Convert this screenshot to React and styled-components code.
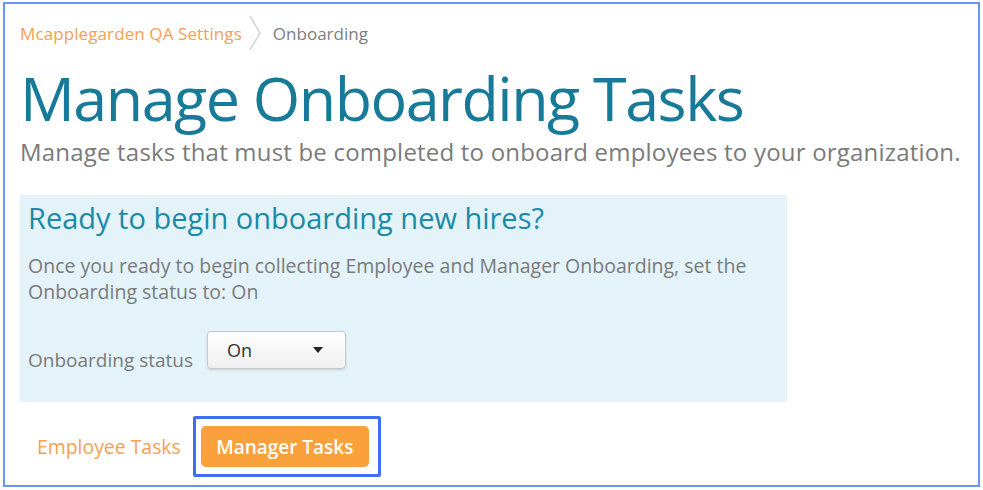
import styled, { createGlobalStyle } from 'styled-components'

const GlobalStyle = createGlobalStyle`
    html, body {
        margin: 0;
        padding: 0;
        background: #ffffff;
    }

    body {
        font-family: 'Open Sans', 'Liberation Sans', sans-serif;
    }
`

const Frame = styled.div`
    box-sizing: border-box;
    width: 977px;
    height: 485px;
    margin: 2px 0 0 3px;
    border: 2px solid #6a95f2;
    padding: 16px 0 0 15px;
`

const Breadcrumb = styled.div`
    display: flex;
    align-items: center;
    height: 26px;
    font-size: 17px;

    .crumb-link {
        color: #f7a052;
        letter-spacing: 0.1px;
    }

    .crumb-sep {
        display: flex;
        margin: 0 11px 0 6px;
    }

    .crumb-current {
        color: #7b7e82;
    }
`

const Title = styled.h1`
    margin: 21px 0 0;
    font-size: 61px;
    font-weight: 400;
    line-height: 61px;
    letter-spacing: -1.5px;
    color: #177a98;
`

const Subtitle = styled.p`
    margin: 10px 0 0;
    font-size: 24px;
    line-height: 28px;
    letter-spacing: 0.2px;
    color: #7b7b7b;
`

const Panel = styled.div`
    box-sizing: border-box;
    width: 767px;
    height: 207px;
    margin-top: 29px;
    padding: 5px 8px 0 8px;
    background: #e3f3f9;

    .panel-title {
        margin: 0;
        font-size: 29px;
        font-weight: 400;
        line-height: 36px;
        color: #1a8aa6;
    }

    .panel-text {
        margin: 17px 0 0;
        font-size: 19.5px;
        line-height: 26px;
        color: #7a7a7a;
    }
`

const StatusRow = styled.div`
    display: flex;
    align-items: flex-start;
    gap: 14px;
    margin-top: 26px;

    .status-label {
        margin-top: 16px;
        font-size: 19px;
        line-height: 26px;
        color: #7a7a7a;
    }
`

const Select = styled.div`
    box-sizing: border-box;
    display: flex;
    align-items: center;
    justify-content: space-between;
    width: 139px;
    height: 38px;
    padding: 0 22px 0 19px;
    border: 1px solid #c8c8c8;
    border-radius: 4px;
    background: linear-gradient(#ffffff, #f0f0f0);
    box-shadow: 0 1px 2px rgba(0, 0, 0, 0.15);
    font-size: 18px;
    color: #333333;
`

const Tabs = styled.div`
    display: flex;
    align-items: center;
    margin-top: 14px;
    padding-left: 17px;
`

const TabLink = styled.span`
    margin-right: 12px;
    font-size: 19.4px;
    color: #f7a052;
`

const TabHighlight = styled.div`
    box-sizing: border-box;
    padding: 7px 9px 7px 5px;
    border: 3px solid #3f6ef0;
    border-radius: 2px;
`

const TabButton = styled.div`
    box-sizing: border-box;
    display: flex;
    align-items: center;
    justify-content: center;
    width: 168px;
    height: 41px;
    border-radius: 5px;
    background: #fba13c;
    color: #ffffff;
    font-size: 19px;
    font-weight: 600;
`

const Chevron = () => (
    <svg width="14" height="36" viewBox="0 0 14 36" style={{ margin: '-5px 0' }}>
        <path d="M2 1 L12 18 L2 35" fill="none" stroke="#d4d4d4" strokeWidth="1.5" />
    </svg>
)

const Caret = () => (
    <svg width="10" height="6" viewBox="0 0 10 6">
        <path d="M0 0 L10 0 L5 6 Z" fill="#222222" />
    </svg>
)

const App = () => {
    return (
        <>
            <GlobalStyle />
            <Frame>
                <Breadcrumb>
                    <span className="crumb-link">Mcapplegarden QA Settings</span>
                    <span className="crumb-sep">
                        <Chevron />
                    </span>
                    <span className="crumb-current">Onboarding</span>
                </Breadcrumb>
                <Title>Manage Onboarding Tasks</Title>
                <Subtitle>
                    Manage tasks that must be completed to onboard employees to your organization.
                </Subtitle>
                <Panel>
                    <h2 className="panel-title">Ready to begin onboarding new hires?</h2>
                    <p className="panel-text">
                        Once you ready to begin collecting Employee and Manager Onboarding, set the
                        <br />
                        Onboarding status to: On
                    </p>
                    <StatusRow>
                        <span className="status-label">Onboarding status</span>
                        <Select>
                            <span>On</span>
                            <Caret />
                        </Select>
                    </StatusRow>
                </Panel>
                <Tabs>
                    <TabLink>Employee Tasks</TabLink>
                    <TabHighlight>
                        <TabButton>Manager Tasks</TabButton>
                    </TabHighlight>
                </Tabs>
            </Frame>
        </>
    )
}

export default App
